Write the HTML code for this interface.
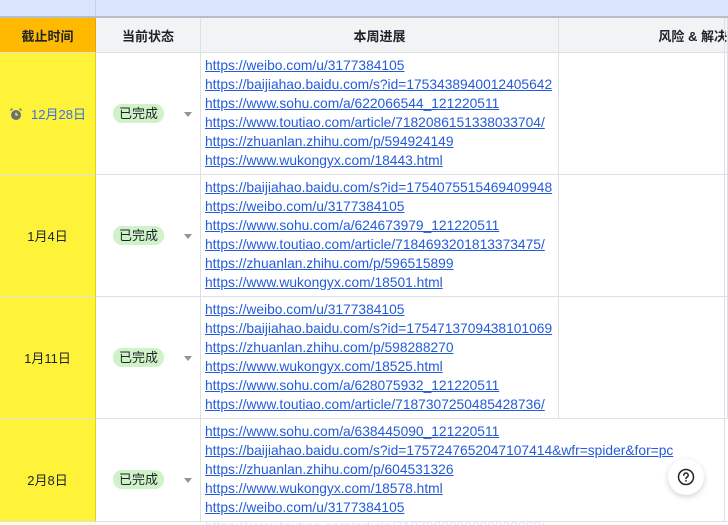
<!DOCTYPE html>
<html><head><meta charset="utf-8"><style>
*{margin:0;padding:0;box-sizing:border-box}
html,body{width:728px;height:525px;overflow:hidden}
body{background:#fff;font-family:"Liberation Sans","Noto Sans CJK SC",sans-serif;font-size:13px;color:#1f2329;position:relative}
.top{position:absolute;left:0;top:0;width:728px;height:18px;background:#dbe4fd;border-bottom:2px solid #b8bec8}
.top i{position:absolute;left:95px;top:0;width:1px;height:16px;background:#c7d0e8}
.hdr{position:absolute;top:18px;height:35px;border-bottom:1px solid #dee0e3;border-right:1px solid #dee0e3;background:#f2f3f5;font-weight:bold;font-size:13px;display:flex;align-items:center;justify-content:center}
.c1{left:0;width:96px}
.cell{position:absolute;border-bottom:1px solid #dee0e3;border-right:1px solid #dee0e3;overflow:visible}
.y{background:#fff33a;left:0;width:96px;display:flex;align-items:center;justify-content:center;border-right:1px solid #e6d200}
.st{left:96px;width:105px;display:flex;align-items:center}
.tag{margin-left:17px;background:#d0f2c9;border-radius:9px;padding:1px 6px;font-size:13px;line-height:17px}
.arr{position:absolute;left:88px;top:50%;margin-top:-2px;width:0;height:0;border-left:4px solid transparent;border-right:4px solid transparent;border-top:5px solid #8f959e}
.lk{left:201px;width:358px;padding:3px 0 0 4px;white-space:nowrap}
.lk a{display:block;color:#245bdb;text-decoration:underline;font-size:13.8px;line-height:19px;height:19px}
.r4{width:527px;border-right:none;overflow:hidden;height:122px}
.rest{left:559px;width:169px}
.help{position:absolute;left:668px;top:459px;width:36px;height:36px;border-radius:50%;background:#fff;box-shadow:0 2px 6px rgba(0,0,0,.18);display:flex;align-items:center;justify-content:center}
</style></head><body>
<div class="top"><i></i></div>
<div class="hdr c1" style="background:#ffb900;border-right-color:#e0a800">截止时间</div>
<div class="hdr" style="left:96px;width:105px">当前状态</div>
<div class="hdr" style="left:201px;width:358px">本周进展</div>
<div class="hdr" style="left:559px;width:169px;justify-content:flex-end;white-space:nowrap;overflow:hidden">风险 &amp; 解决</div>

<div class="cell y" style="top:53px;height:122px"><svg width="14" height="14" viewBox="0 0 14 14" style="margin-right:8px"><circle cx="7" cy="8" r="5" fill="#6b7079"/><path d="M7 5.5V8h2" stroke="#fff33a" stroke-width="1.3" fill="none"/><path d="M1.5 3.5L3.5 1.5M12.5 3.5L10.5 1.5" stroke="#6b7079" stroke-width="1.3"/></svg><span style="color:#3a6ee8">12月28日</span></div>
<div class="cell st" style="top:53px;height:122px"><span class="tag">已完成</span><i class="arr"></i></div>
<div class="cell lk" style="top:53px;height:122px">
<a>https://weibo.com/u/3177384105</a><a>https://baijiahao.baidu.com/s?id=1753438940012405642</a><a>https://www.sohu.com/a/622066544_121220511</a><a>https://www.toutiao.com/article/7182086151338033704/</a><a>https://zhuanlan.zhihu.com/p/594924149</a><a>https://www.wukongyx.com/18443.html</a></div>
<div class="cell rest" style="top:53px;height:122px"></div>

<div class="cell y" style="top:175px;height:122px">1月4日</div>
<div class="cell st" style="top:175px;height:122px"><span class="tag">已完成</span><i class="arr"></i></div>
<div class="cell lk" style="top:175px;height:122px">
<a>https://baijiahao.baidu.com/s?id=1754075515469409948</a><a>https://weibo.com/u/3177384105</a><a>https://www.sohu.com/a/624673979_121220511</a><a>https://www.toutiao.com/article/7184693201813373475/</a><a>https://zhuanlan.zhihu.com/p/596515899</a><a>https://www.wukongyx.com/18501.html</a></div>
<div class="cell rest" style="top:175px;height:122px"></div>

<div class="cell y" style="top:297px;height:122px">1月11日</div>
<div class="cell st" style="top:297px;height:122px"><span class="tag">已完成</span><i class="arr"></i></div>
<div class="cell lk" style="top:297px;height:122px">
<a>https://weibo.com/u/3177384105</a><a>https://baijiahao.baidu.com/s?id=1754713709438101069</a><a>https://zhuanlan.zhihu.com/p/598288270</a><a>https://www.wukongyx.com/18525.html</a><a>https://www.sohu.com/a/628075932_121220511</a><a>https://www.toutiao.com/article/7187307250485428736/</a></div>
<div class="cell rest" style="top:297px;height:122px"></div>

<div class="cell y" style="top:419px;height:122px">2月8日</div>
<div class="cell st" style="top:419px;height:122px"><span class="tag">已完成</span><i class="arr"></i></div>
<div class="cell lk r4" style="top:419px">
<a>https://www.sohu.com/a/638445090_121220511</a><a>https://baijiahao.baidu.com/s?id=1757247652047107414&amp;wfr=spider&amp;for=pc</a><a>https://zhuanlan.zhihu.com/p/604531326</a><a>https://www.wukongyx.com/18578.html</a><a>https://weibo.com/u/3177384105</a><a>https://www.toutiao.com/article/7197000000000000000/</a></div>
<div style="position:absolute;left:0;top:521px;width:728px;height:20px;background:rgba(255,255,255,.85);border-top:1px solid #dee0e3"></div>
<div style="position:absolute;left:724px;top:18px;width:1px;height:504px;background:#dee0e3"></div>
<div class="help"><svg width="18" height="18" viewBox="0 0 18 18"><circle cx="9" cy="9" r="7.5" fill="none" stroke="#1f2329" stroke-width="1.5"/><path d="M6.8 7.2a2.2 2.2 0 1 1 3 2c-.6.3-.8.7-.8 1.3" fill="none" stroke="#1f2329" stroke-width="1.5" stroke-linecap="round"/><circle cx="9" cy="12.9" r=".9" fill="#1f2329"/></svg></div>
</body></html>
